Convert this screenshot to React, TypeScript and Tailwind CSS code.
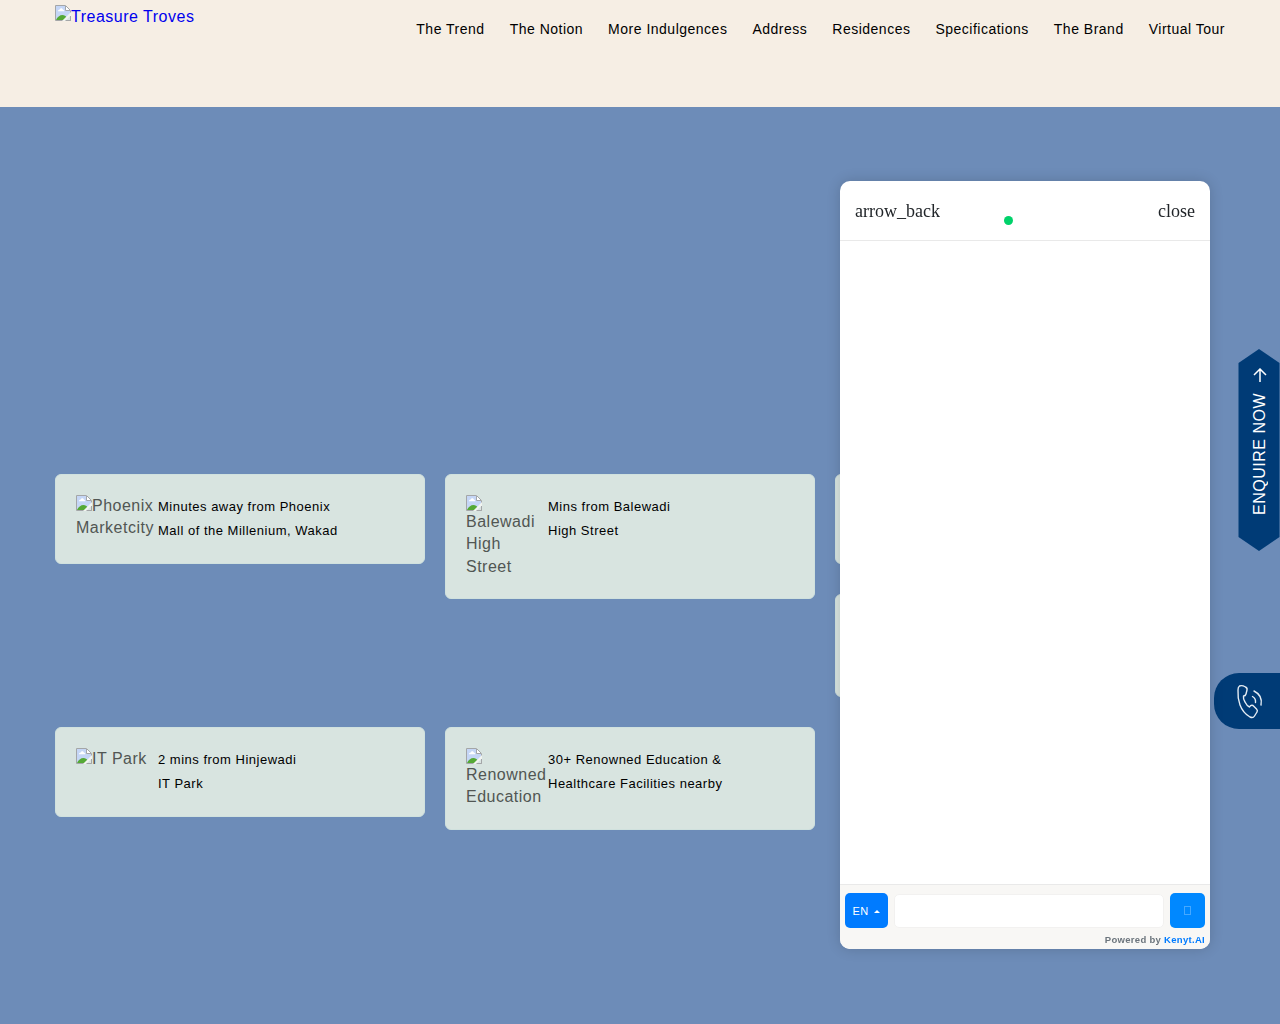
import React from "react";

const navItems = ["The Trend", "The Notion", "More Indulgences", "Address", "Residences", "Specifications", "The Brand", "Virtual Tour"];

function BrokenImage() {
  return (
    <svg className="float-left block h-4 w-4" viewBox="0 0 16 16" aria-hidden="true">
      <path d="M1 1h10l4 4v10H1z" fill="#c5d6f6" />
      <path d="M1 15c1-3 4-5 6.500-5 2 0 3 1 4 2.200L8.500 15z" fill="#55a936" />
      <path d="M3 6.200c0-1 .8-1.400 1.500-1.400.3-1 1-1.500 1.800-1.500S7.800 4 8 4.800c.8 0 1.300.6 1.300 1.400z" fill="#fff" />
      <path d="M10.500.500v5h5z" fill="#fff" />
      <path d="M15.500 16V5.500l-5-5H.5v15H8" fill="none" stroke="#a4a6a8" />
      <path d="M10.500 1v4.500H15" fill="none" stroke="#a4a6a8" />
      <path d="M7 16l9-9v3.500L10.500 16z" fill="#f1f4f0" />
      <path d="M11 15.500h4.500V11z" fill="#dce5e2" />
      <path d="M10.500 15.500h5v-4.500" fill="none" stroke="#a4a6a8" />
    </svg>
  );
}

function Card({ alt, lines }: { alt: string[]; lines: string[] }) {
  return (
    <article className="flex w-[370px] rounded-[6px] border border-[#d0e1de] bg-[#d8e4e0] p-5">
      <div className="w-[82px] shrink-0 text-base leading-[22.5px] text-[#515653]">
        <BrokenImage />
        {alt.map((line) => (
          <React.Fragment key={line}>
            {line}
            <br />
          </React.Fragment>
        ))}
      </div>
      <p className="text-[13px] leading-6 whitespace-nowrap text-black">
        {lines.map((line) => (
          <span key={line} className="block">{line}</span>
        ))}
      </p>
    </article>
  );
}

function ChatPanel() {
  return (
    <aside className="fixed top-[181px] left-[840px] z-10 flex h-[768px] w-[370px] flex-col overflow-hidden rounded-[10px] bg-white shadow-[0_0_14px_rgba(0,0,0,0.16)]">
      <header className="relative flex h-[60px] shrink-0 items-center justify-between border-b border-[#e9e9e9] px-[15px] font-['Liberation_Serif',serif] text-lg tracking-normal text-[#212529]">
        <span>arrow_back</span>
        <span>close</span>
        <i className="absolute top-[35px] left-[164px] h-[9px] w-[9px] rounded-full bg-[#00d26a]" />
      </header>
      <div className="flex-1" />
      <footer className="h-[65px] shrink-0 border-t border-[#e9e9e9] bg-[#f8f7f5] px-[5px] pt-2">
        <div className="flex h-[35px] items-center">
          <button className="flex h-[35px] w-[43px] items-center justify-center gap-1.5 rounded-[5px] bg-[#007bff] pt-px text-[11px] tracking-[0.3px] text-white">
            EN
            <svg className="h-[3px] w-1.5" viewBox="0 0 6 3"><path d="M0 3L3 0l3 3z" fill="white" /></svg>
          </button>
          <div className="mr-1.5 ml-1.5 h-[34px] flex-1 rounded-[5px] border border-[#f2f1f0] bg-white" />
          <button aria-label="Send" className="flex h-[35px] w-[35px] items-center justify-center rounded-[5px] bg-[#0088ff]">
            <span className="h-[9px] w-[7px] border border-[#46a8ff]" />
          </button>
        </div>
        <p className="mt-1.5 text-right text-[9.5px] leading-3 font-bold tracking-[0.3px] whitespace-nowrap text-[#6c757d]">
          Powered by <span className="text-[#007bff]">Kenyt.AI</span>
        </p>
      </footer>
    </aside>
  );
}

export default function App() {
  return (
    <div className="h-screen overflow-hidden bg-[#6d8cb8] font-['Liberation_Sans',Arial,sans-serif] tracking-[0.5px]">
      <header className="flex h-[107px] justify-between bg-[#f6eee4] px-[55px]">
        <a className="mt-[5px] block text-base leading-6 whitespace-nowrap text-[#0000ee]">
          <BrokenImage />
          Treasure Troves
        </a>
        <nav className="mt-[19px] flex gap-[25px] text-sm leading-5 whitespace-nowrap text-black">
          {navItems.map((item) => (
            <a key={item}>{item}</a>
          ))}
        </nav>
      </header>

      <main className="grid grid-cols-[370px_370px_370px] items-start gap-x-5 gap-y-[30px] px-[55px] pt-[366.800px]">
        <Card alt={["Phoenix", "Marketcity"]} lines={["Minutes away from Phoenix", "Mall of the Millenium, Wakad"]} />
        <Card alt={["Balewadi", "High", "Street"]} lines={["Mins from Balewadi", "High Street"]} />
        <div className="flex flex-col gap-[30px]">
          <div className="h-[90px] rounded-[6px] border border-[#d0e1de] bg-[#d8e4e0]" />
          <div className="h-[102.800px] rounded-[6px] border border-[#d0e1de] bg-[#d8e4e0]" />
        </div>
        <Card alt={["IT Park"]} lines={["2 mins from Hinjewadi", "IT Park"]} />
        <Card alt={["Renowned", "Education"]} lines={["30+ Renowned Education &", "Healthcare Facilities nearby"]} />
      </main>

      <ChatPanel />

      <a className="fixed top-[349px] right-0 flex h-[202px] w-[42px] flex-col items-center bg-[#003b76] pt-[19px] pl-px text-white [clip-path:polygon(21px_0,41.5px_14px,41.5px_188px,21px_202px,0.5px_188px,0.5px_14px)]">
        <svg className="h-[14px] w-[14px] shrink-0" viewBox="0 0 14 14" fill="none" stroke="currentColor" strokeWidth="1.5">
          <path d="M7 14V1M1 7l6-6 6 6" />
        </svg>
        <span className="mt-[11px] rotate-180 text-base leading-5 tracking-[0.5px] whitespace-nowrap [writing-mode:vertical-rl]">ENQUIRE NOW</span>
      </a>

      <a aria-label="Call" className="fixed top-[673px] left-[1214px] flex h-[56px] w-[66px] items-center rounded-l-[25px] bg-[#003b76] pt-0.5 pl-[21.5px]">
        <svg className="h-[36px] w-[28px]" viewBox="0 0 28 36" fill="none" stroke="#e5edf4" strokeWidth="1.4" strokeLinecap="round" strokeLinejoin="round">
          <path d="M3.500 2Q6 1 9.500 3Q11.500 4 11 6L10 10Q9.500 12 7.500 12Q7 15 9 18Q11 22 13.500 23Q15 20.500 17 21.500L20.500 25Q22 26.500 21 28L18.500 32Q17 34.500 14 33Q7 29 4 21Q1.500 14 2 6Q2 3 3.500 2Z" />
          <path d="M16.500 12.500Q20 14.500 19.500 18.500M18 7Q27 11.500 25 21" />
        </svg>
      </a>
    </div>
  );
}
